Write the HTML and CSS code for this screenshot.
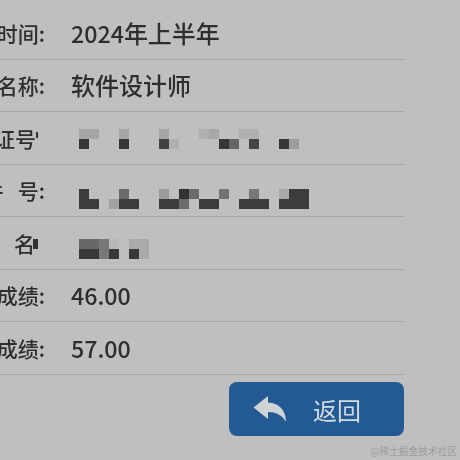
FILE: index.html
```html
<!DOCTYPE html>
<html lang="zh">
<head>
<meta charset="utf-8">
<title>成绩查询</title>
<link rel="stylesheet" href="styles.css">
</head>
<body>
<main class="page">
  <div class="rows">
    <div class="row"><div class="label"><span>资格时间:</span></div><div class="value"><span class="num">2024</span>年上半年</div></div>
    <div class="row"><div class="label"><span>资格名称:</span></div><div class="value">软件设计师</div></div>
    <div class="row"><div class="label label-clip"><span>准考证号</span><i class="frag"></i></div>
      <svg class="mosaic m1" width="240" height="20" viewBox="0 0 24 2" shape-rendering="crispEdges">
        <g fill="#a6a6a6"><rect x="0" y="0" width="2" height="1"/><rect x="4" y="0" width="1" height="1"/><rect x="8" y="0" width="1" height="1"/></g>
        <g fill="#b0b0b0"><rect x="12" y="0" width="1" height="1"/><rect x="13" y="0" width="1" height="1" fill="#a8a8a8"/><rect x="16" y="0" width="2" height="1"/><rect x="9" y="1" width="1" height="1"/></g>
        <g fill="#363636"><rect x="0" y="1" width="1" height="1"/><rect x="4" y="1" width="1" height="1"/><rect x="8" y="1" width="1" height="1" fill="#424242"/><rect x="14" y="1" width="1" height="1"/><rect x="17" y="1" width="1" height="1" fill="#444"/><rect x="20" y="1" width="1" height="1"/></g>
        <rect x="15" y="1" width="1" height="1" fill="#666"/><rect x="21" y="1" width="1" height="1" fill="#9c9c9c"/>
      </svg>
    </div>
    <div class="row"><div class="label"><span>证   件   号:</span></div>
      <svg class="mosaic m2" width="240" height="20" viewBox="0 0 24 2" shape-rendering="crispEdges">
        <g fill="#3c3c3c"><rect x="0" y="0" width="1" height="2"/><rect x="0" y="1" width="2" height="1"/><rect x="4" y="1" width="2" height="1"/><rect x="8" y="1" width="2" height="1"/><rect x="10" y="0" width="1" height="1" fill="#333"/><rect x="12" y="1" width="2" height="1"/><rect x="16" y="1" width="3" height="1"/><rect x="20" y="1" width="3" height="1"/><rect x="21" y="0" width="2" height="1"/></g>
        <g fill="#6b6b6b"><rect x="4" y="0" width="1" height="1"/><rect x="11" y="0" width="1" height="1"/><rect x="10" y="1" width="1" height="1"/><rect x="14" y="0" width="1" height="1" fill="#727272"/><rect x="17" y="0" width="1" height="1" fill="#777"/></g>
        <g fill="#a2a2a2"><rect x="3" y="1" width="1" height="1"/><rect x="8" y="0" width="1" height="1" fill="#9c9c9c"/><rect x="20" y="0" width="1" height="1" fill="#a8a8a8"/></g>
      </svg>
    </div>
    <div class="row"><div class="label label-clip"><span>姓       名</span><i class="frag frag-name"></i></div>
      <svg class="mosaic m3" width="240" height="20" viewBox="0 0 24 2" shape-rendering="crispEdges">
        <g fill="#686868"><rect x="0" y="0" width="2" height="1"/></g>
        <g fill="#787878"><rect x="2" y="0" width="1" height="2"/></g>
        <g fill="#aaa"><rect x="5" y="0" width="2" height="1"/><rect x="6" y="1" width="1" height="1"/></g>
        <rect x="3" y="0" width="1" height="1" fill="#b8b8b8"/>
        <g fill="#383838"><rect x="0" y="1" width="2" height="1"/><rect x="3" y="1" width="1" height="1"/><rect x="5" y="1" width="1" height="1"/></g>
      </svg>
    </div>
    <div class="row"><div class="label"><span>上午成绩:</span></div><div class="value num">46.00</div></div>
    <div class="row"><div class="label"><span>下午成绩:</span></div><div class="value num">57.00</div></div>
  </div>
  <button class="back" type="button">
    <svg class="back-icon" width="34" height="28" viewBox="253 395 34 28"><path d="M253.5 407.5 268 396v6.5c11 .5 18 7.5 18 19.5-4-7-10-10-18-10v7z"/></svg>
    <span>返回</span>
  </button>
</main>
<div class="watermark">@稀土掘金技术社区</div>
</body>
</html>
```

FILE: styles.css
```css
html, body {
  margin: 0;
  width: 460px;
  height: 460px;
  overflow: hidden;
  background: #bfbfbf;
}
body {
  position: relative;
  font-family: "Noto Sans CJK SC", "Noto Sans", sans-serif;
  color: #2e2e2e;
}
.page {
  width: 404px;
  padding-top: 7px;
  filter: blur(0.45px);
}
.row {
  display: flex;
  align-items: center;
  height: 52.5px;
  box-sizing: border-box;
  border-bottom: 1px solid #a6a6a6;
}
.label {
  flex: none;
  width: 45px;
  display: flex;
  justify-content: flex-end;
  overflow: hidden;
  white-space: pre;
  font-size: 21px;
  font-weight: 500;
  line-height: 30px;
  margin-right: 26px;
}
.label-clip {
  width: 38px;
  margin-right: 33px;
}
.label span { flex: none; }
.frag {
  flex: none;
  width: 2px;
  height: 6px;
  margin-top: 9px;
  background: #333;
}
.frag-name {
  width: 5px;
  height: 10px;
  margin: 11px 0 0 -2px;
}
.value {
  font-size: 24px;
  font-weight: 500;
  line-height: 32px;
}
.num {
  font-size: 23.2px;
}
.mosaic {
  display: block;
  flex: none;
  margin-left: 8px;
}
.m1 { margin-top: 2px; }
.m2 { margin-top: 18px; }
.m3 { margin-top: 12px; }
.back {
  display: flex;
  align-items: center;
  gap: 26px;
  width: 175px;
  height: 54px;
  margin: 7.5px 0 0 229px;
  padding: 0 0 0 24px;
  border: 0;
  border-radius: 8px;
  background: #235a94;
  color: #d4dbe3;
  font-family: inherit;
  font-size: 24px;
}
.back-icon { flex: none; fill: #cfd3d6; }
.watermark {
  position: absolute;
  right: 3px;
  bottom: 1px;
  font-size: 9.7px;
  line-height: 16px;
  color: #9c9c9c;
}
```
